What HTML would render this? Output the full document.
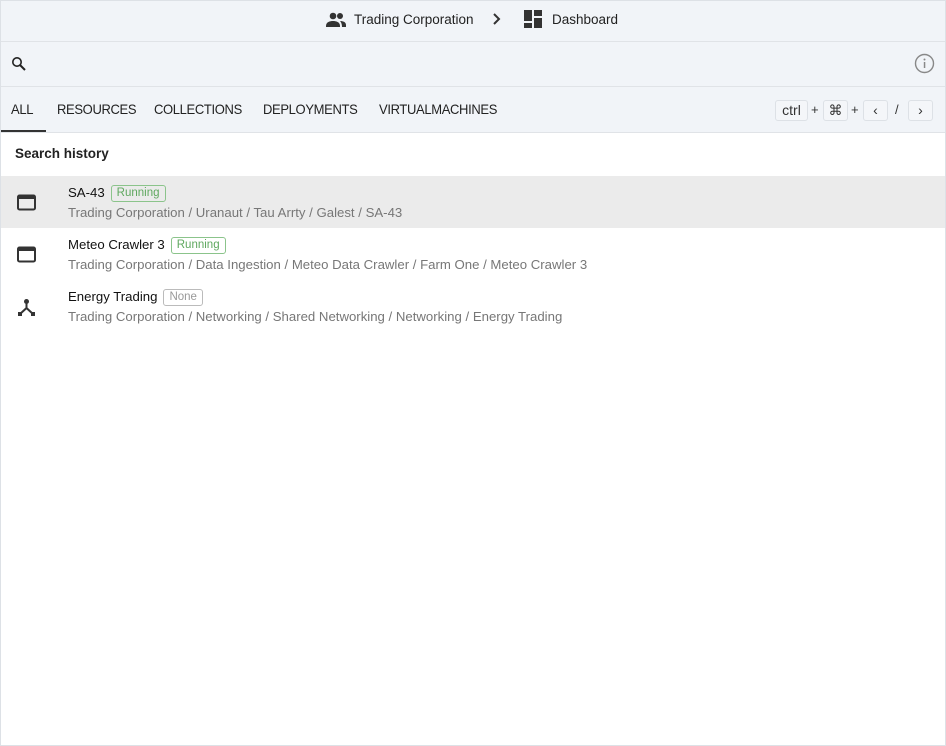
<!DOCTYPE html><html><head><style>
*{box-sizing:border-box;margin:0;padding:0}
body{width:946px;height:746px;background:#fff;font-family:"Liberation Sans",sans-serif;overflow:hidden;position:relative}
.frame{position:absolute;left:0;top:0;width:946px;height:746px;border:1px solid #dde1e6;pointer-events:none}
.hdr{position:absolute;left:0;top:0;width:946px;height:42px;background:#f1f4f8;border-bottom:1px solid #e0e3e7}
.srch{position:absolute;left:0;top:42px;width:946px;height:45px;background:#f1f4f8;border-bottom:1px solid #e0e3e7}
.tabs{position:absolute;left:0;top:87px;width:946px;height:46px;background:#f1f4f8;border-bottom:1px solid #e0e3e7}
.t{position:absolute;top:15px;font-size:13px;line-height:14px;color:#222;letter-spacing:-0.35px;transform:scaleY(1.08);transform-origin:top left}
.ab{position:absolute;top:130px;left:0;width:46px;height:2px;background:#333}
.k{position:absolute;top:13px;height:21px;border:1px solid #dde1e6;border-radius:3px;font-size:14px;color:#333;text-align:center;line-height:19px;background:#f4f6f9}
.p{position:absolute;top:15px;font-size:13px;color:#333}
.row{position:absolute;left:0;width:946px;height:52px}
.nm{position:absolute;left:68px;top:9px;font-size:13.2px;color:#111}
.pt{position:absolute;left:68px;top:29px;font-size:13.2px;color:#777}
.b{display:inline-block;margin-left:6px;border:1px solid #8bc48b;color:#5fa85f;border-radius:3px;font-size:11.5px;padding:0 5px;line-height:15px;vertical-align:1px}
.ic{position:absolute;left:17px;top:18px}
</style></head><body>
<div class="hdr">
<svg style="position:absolute;left:325px;top:11px" width="22" height="18" viewBox="0 0 22 18"><circle cx="8" cy="5" r="3.3" fill="#333"/><circle cx="15" cy="5" r="3" fill="#333"/><path d="M1 15c0-4 4-5 7-5s7 1 7 5v1H1z" fill="#333"/><path d="M15 10c3 0 6 1 6 4v2h-4c0-3-1-5-2-6z" fill="#333"/></svg>
<div style="position:absolute;left:354px;top:12px;font-size:13.5px;color:#222">Trading Corporation</div>
<svg style="position:absolute;left:492px;top:12px" width="10" height="14" viewBox="0 0 10 14"><path d="M2 2l5 5-5 5" stroke="#333" stroke-width="2" fill="none"/></svg>
<svg style="position:absolute;left:523px;top:9px" width="20" height="20" viewBox="0 0 20 20"><rect x="1" y="1" width="8" height="11" fill="#333"/><rect x="11" y="1" width="8" height="6" fill="#333"/><rect x="1" y="14" width="8" height="5" fill="#333"/><rect x="11" y="9" width="8" height="10" fill="#333"/></svg>
<div style="position:absolute;left:552px;top:12px;font-size:13.5px;color:#222">Dashboard</div>
</div>
<div class="srch">
<svg style="position:absolute;left:11px;top:14px" width="16" height="16" viewBox="0 0 16 16"><circle cx="6" cy="6" r="4.2" stroke="#222" stroke-width="1.6" fill="none"/><path d="M9 9l5 5" stroke="#222" stroke-width="2"/></svg>
<svg style="position:absolute;left:914px;top:11px" width="21" height="21" viewBox="0 0 21 21"><circle cx="10.5" cy="10.5" r="9" stroke="#888" stroke-width="1.4" fill="none"/><rect x="9.8" y="9" width="1.5" height="6" fill="#888"/><circle cx="10.5" cy="6.5" r="1" fill="#888"/></svg>
</div>
<div class="tabs">
<div class="t" style="left:11px">ALL</div>
<div class="t" style="left:57px">RESOURCES</div>
<div class="t" style="left:154px">COLLECTIONS</div>
<div class="t" style="left:263px">DEPLOYMENTS</div>
<div class="t" style="left:379px">VIRTUALMACHINES</div>
<div class="k" style="left:775px;width:33px">ctrl</div>
<div class="p" style="left:811px">+</div>
<div class="k" style="left:823px;width:25px">⌘</div>
<div class="p" style="left:851px">+</div>
<div class="k" style="left:863px;width:25px">‹</div>
<div class="p" style="left:895px">/</div>
<div class="k" style="left:908px;width:25px">›</div>
</div>
<div class="ab"></div>
<div style="position:absolute;left:15px;top:146px;font-size:13.5px;font-weight:bold;color:#222">Search history</div>
<div class="row" style="top:176px;background:#ebebeb">
<svg class="ic" width="19" height="17" viewBox="0 0 19 17"><rect x="1" y="1.5" width="17" height="14" rx="1.5" stroke="#333" stroke-width="2" fill="none"/><rect x="1" y="1.5" width="17" height="3.5" fill="#333"/></svg>
<div class="nm">SA-43<span class="b">Running</span></div>
<div class="pt">Trading Corporation / Uranaut / Tau Arrty / Galest / SA-43</div></div>
<div class="row" style="top:228px">
<svg class="ic" width="19" height="17" viewBox="0 0 19 17"><rect x="1" y="1.5" width="17" height="14" rx="1.5" stroke="#333" stroke-width="2" fill="none"/><rect x="1" y="1.5" width="17" height="3.5" fill="#333"/></svg>
<div class="nm">Meteo Crawler 3<span class="b">Running</span></div>
<div class="pt">Trading Corporation / Data Ingestion / Meteo Data Crawler / Farm One / Meteo Crawler 3</div></div>
<div class="row" style="top:280px">
<svg class="ic" width="19" height="19" viewBox="0 0 19 19"><path d="M9.5 4v6L3 16M9.5 10l6.5 6" stroke="#333" stroke-width="2" fill="none"/><circle cx="9.5" cy="3.5" r="2.5" fill="#333"/><rect x="1" y="14" width="4" height="4" fill="#333"/><rect x="14" y="14" width="4" height="4" fill="#333"/></svg>
<div class="nm">Energy Trading<span class="b" style="border-color:#bbb;color:#999">None</span></div>
<div class="pt">Trading Corporation / Networking / Shared Networking / Networking / Energy Trading</div></div>
<div class="frame"></div>
</body></html>
